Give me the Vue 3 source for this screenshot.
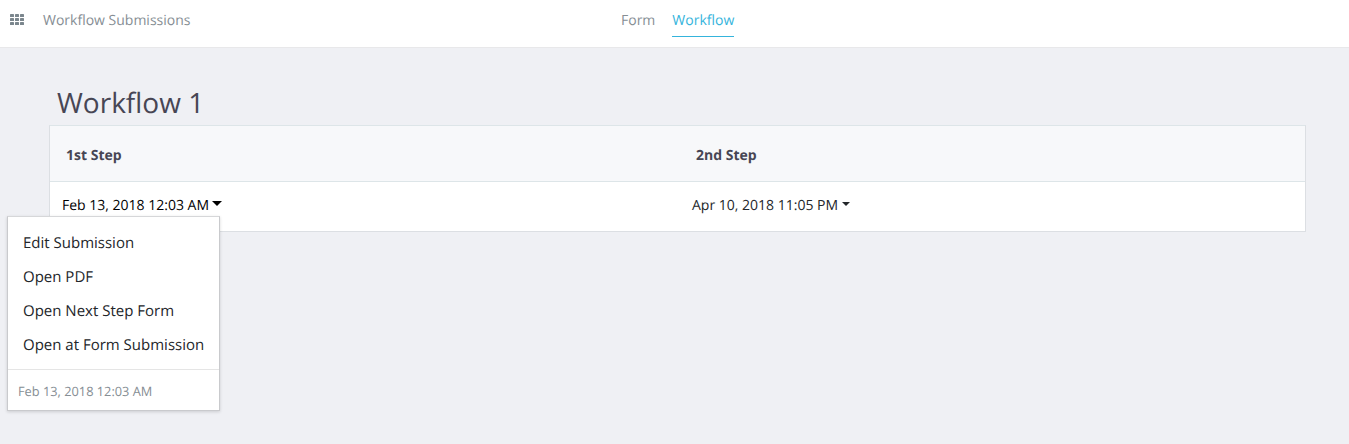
<script setup>
const menu = ['Edit Submission', 'Open PDF', 'Open Next Step Form', 'Open at Form Submission']
</script>

<template>
  <div class="page">
    <header class="topbar">
      <div class="brand">
        <svg width="14" height="12" viewBox="0 0 14 12" fill="#7b868d">
          <template v-for="r in 3" :key="r">
            <rect v-for="c in 3" :key="c" :x="(c - 1) * 5" :y="(r - 1) * 4" width="4" height="3" rx=".6" />
          </template>
        </svg>
        <span>Workflow Submissions</span>
      </div>
      <nav class="tabs">
        <a class="tab">Form</a>
        <a class="tab active">Workflow</a>
      </nav>
    </header>
    <main>
      <h1>Workflow 1</h1>
      <section class="table">
        <div class="row head"><div>1st Step</div><div>2nd Step</div></div>
        <div class="row body">
          <div class="date open">
            <span>Feb 13, 2018 12:03 AM</span><i class="caret"></i>
            <div class="menu">
              <ul><li v-for="m in menu" :key="m">{{ m }}</li></ul>
              <div class="stamp">Feb 13, 2018 12:03 AM</div>
            </div>
          </div>
          <div class="date"><span>Apr 10, 2018 11:05 PM</span><i class="caret"></i></div>
        </div>
      </section>
    </main>
  </div>
</template>

<style>
body { margin: 0; background: #eff0f4; }
</style>

<style scoped>
* { box-sizing: border-box; }
.page { height: 444px; overflow: hidden; background: #eff0f4; font: 14px/20px "Open Sans", sans-serif; color: #23262a; text-rendering: geometricPrecision; }
.topbar { height: 48px; background: #fff; border-bottom: 1px solid #e8e8ea; display: grid; grid-template-columns: 621px 1fr; color: #868e94; }
.brand { display: flex; align-items: center; gap: 19px; height: 40px; padding-left: 10px; }
.brand span { padding-top: 2px; }
.tabs { display: flex; gap: 17px; align-items: flex-start; }
.tab { height: 37px; padding-top: 11px; }
.active { color: #35b4dc; border-bottom: 1px solid #35b4dc; }
main { padding: 35px 43px 0 49px; }
h1 { margin: 0; padding-left: 8px; height: 42px; font-size: 28px; line-height: 40px; font-weight: 400; color: #474654; }
.table { background: #fff; border: 1px solid #dcdfe3; border-top-color: #dde5e8; height: 107px; }
.row { display: grid; grid-template-columns: 630px 1fr; }
.head { height: 56px; background: #f7f8fa; border-bottom: 1px solid #dde5e8; align-items: center; padding: 5px 0 0 16px; font-weight: 700; color: #474654; }
.body { height: 49px; padding: 0 0 2px 12px; align-items: center; }
.date { position: relative; display: flex; align-items: center; white-space: nowrap; }
.open { color: #000; }
.caret { margin: -4px 0 0 4px; border: 4px solid transparent; border-top-color: currentColor; border-bottom: 0; }
.open .caret { margin-left: 3px; border-width: 5px 5px 0; }
.menu { position: absolute; left: -55px; top: 20px; width: 213px; height: 195px; background: #fff; border: 1px solid #c9cacd; border-top-color: #d6d7d9; box-shadow: 0 1px 3px rgba(0,0,0,.15); color: #23262a; }
ul { list-style: none; margin: 0; padding: 9px 0 7px; height: 152px; font-size: 15px; }
li { height: 34px; line-height: 34px; padding-left: 15px; }
.stamp { border-top: 1px solid #e5e5e5; height: 41px; line-height: 42px; padding-left: 10px; font-size: 12.8px; color: #868e94; }
</style>
